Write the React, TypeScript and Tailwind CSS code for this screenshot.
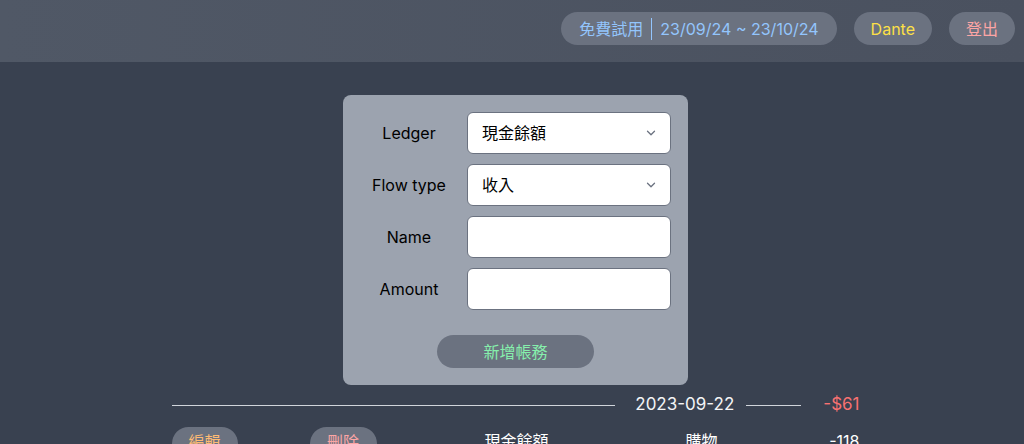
import React from "react";

const font = { fontFamily: '"Inter", "Noto Sans CJK TC", sans-serif' };

function Chevron() {
  return (
    <svg width="14" height="14" viewBox="0 0 24 24" fill="none" stroke="#6b7280" strokeWidth="2.2" strokeLinecap="round" strokeLinejoin="round">
      <path d="M6 9l6 6 6-6" />
    </svg>
  );
}

function Row({ label, children }: { label: string; children: React.ReactNode }) {
  return (
    <div className="flex items-center">
      <div className="w-[92px] text-center text-base text-black">{label}</div>
      <div className="ml-[12px] w-[204px]">{children}</div>
    </div>
  );
}

export default function App() {
  return (
    <div className="min-h-[444px] bg-[#394150]" style={font}>
      <header className="flex h-[62px] items-start justify-end gap-[17px] bg-gradient-to-r from-[#505866] to-[#4a515f] pr-[9px] pt-[12px]">
        <div className="flex h-[33px] items-center rounded-full bg-[#6b7280] px-[18px] text-base text-[#93c5fd]">
          免費試用<span className="mx-[8px] inline-block h-[22px] w-px bg-[#93c5fd]"></span>23/09/24 ~ 23/10/24
        </div>
        <div className="flex h-[33px] items-center rounded-full bg-[#6b7280] px-[17px] text-base text-[#fde047]">Dante</div>
        <div className="flex h-[33px] items-center rounded-full bg-[#6b7280] px-[17px] text-base text-[#fca5a5]">登出</div>
      </header>
      <div className="flex justify-center pl-[7px]">
        <div className="flex w-[688px] flex-col items-center">
          <div className="mt-[33px] flex w-[345px] flex-col rounded-lg bg-[#9ca3af] pb-[17px] pl-[20px] pr-[17px] pt-[17px]">
            <div className="flex flex-col gap-[10px]">
              <Row label="Ledger">
                <div className="flex h-[42px] items-center justify-between rounded-md border border-[#6b7280] bg-white pl-[14px] pr-[12px] text-base text-black">
                  現金餘額 <Chevron />
                </div>
              </Row>
              <Row label="Flow type">
                <div className="flex h-[42px] items-center justify-between rounded-md border border-[#6b7280] bg-white pl-[14px] pr-[12px] text-base text-black">
                  收入 <Chevron />
                </div>
              </Row>
              <Row label="Name">
                <div className="h-[42px] rounded-md border border-[#6b7280] bg-white"></div>
              </Row>
              <Row label="Amount">
                <div className="h-[42px] rounded-md border border-[#6b7280] bg-white"></div>
              </Row>
            </div>
            <div className="mt-[25px] flex justify-center pr-[3px]">
              <div className="flex h-[33px] w-[157px] items-center justify-center rounded-full bg-[#6b7280] text-base text-[#86efac]">新增帳務</div>
            </div>
          </div>
          <div className="mt-[8px] flex h-[24px] w-full items-center">
            <div className="h-px flex-1 bg-[#d1d5db]"></div>
            <div className="ml-[20px] text-[17px] text-[#f3f4f6]">2023-09-22</div>
            <div className="ml-[12px] h-px w-[55px] bg-[#d1d5db]"></div>
            <div className="ml-[22px] text-[17px] text-[#f87171]">-$61</div>
          </div>
          <div className="mt-[10px] flex w-full items-start">
            <div className="w-[138px]">
              <div className="flex h-[33px] w-[66px] items-center justify-center rounded-full bg-[#6b7280] pb-[4px] text-base text-[#fdba74]">編輯</div>
            </div>
            <div className="w-[138px]">
              <div className="flex h-[33px] w-[67px] items-center justify-center rounded-full bg-[#6b7280] pb-[4px] text-base text-[#fca5a5]">刪除</div>
            </div>
            <div className="flex h-[27px] w-[138px] items-center justify-center text-base text-white">現金餘額</div>
            <div className="flex h-[27px] w-[232px] items-center justify-center text-base text-white">購物</div>
            <div className="flex h-[27px] flex-1 items-center justify-end text-base text-white">-118</div>
          </div>
        </div>
      </div>
    </div>
  );
}
